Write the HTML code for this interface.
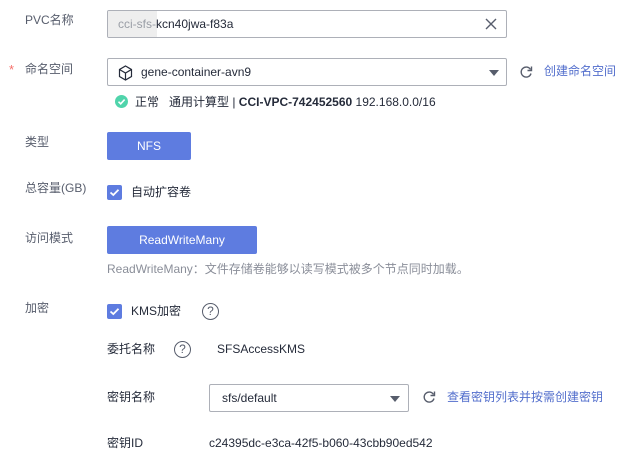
<!DOCTYPE html>
<html><head><meta charset="utf-8"><style>
*{box-sizing:border-box;margin:0;padding:0}
body{width:620px;height:456px;background:#fff;font-family:"Liberation Sans","Noto Sans CJK SC",sans-serif;font-size:12px;color:#252b3a;position:relative;overflow:hidden}
.a{position:absolute;white-space:nowrap;line-height:16px}
.box{position:absolute;border:1px solid #adb0b8;border-radius:2px;background:#fff}
.btn{position:absolute;background:#5e7ce0;color:#fff;border-radius:2px;text-align:center;font-size:12px}
.cb{position:absolute;width:15px;height:15px;background:#5e7ce0;border-radius:2px}
.link{color:#526ecc}
.tri{position:absolute;width:0;height:0;border-left:5px solid transparent;border-right:5px solid transparent;border-top:6px solid #575d6c}
.q{position:absolute;width:17px;height:17px;border:1.3px solid #575d6c;border-radius:50%;font-size:12px;text-align:center;line-height:15px;color:#575d6c}
</style></head><body>
<div class="a" style="left:25px;top:12px;color:#575d6c">PVC名称</div>
<div class="box" style="left:107px;top:10px;width:400px;height:28px;overflow:hidden">
 <div style="position:absolute;left:0;top:0;width:49px;height:26px;background:#eeeeee"></div>
 <div class="a" style="left:10px;top:5px;color:#9a9ea6">cci-sfs-<span style="color:#252b3a">kcn40jwa-f83a</span></div>
 <svg style="position:absolute;left:377px;top:7px" width="12" height="12"><path d="M1 1L11 11M11 1L1 11" stroke="#575d6c" stroke-width="1.4"/></svg>
</div>
<div class="a" style="left:9px;top:62px;color:#f66f6a;font-size:13px">*</div>
<div class="a" style="left:25px;top:61px;color:#575d6c">命名空间</div>
<div class="box" style="left:107px;top:58px;width:400px;height:28px">
 <svg style="position:absolute;left:10px;top:6px" width="15" height="16" viewBox="0 0 15 16"><path d="M7.5 1L13.5 4.5V11.5L7.5 15L1.5 11.5V4.5Z M1.5 4.5L7.5 8L13.5 4.5 M7.5 8V15" fill="none" stroke="#252b3a" stroke-width="1.2"/></svg>
 <div class="a" style="left:33px;top:5px">gene-container-avn9</div>
 <div class="tri" style="left:381px;top:11px"></div>
</div>
<svg style="position:absolute;left:519px;top:65px" width="14" height="14" viewBox="0 0 14 14"><path d="M11.5 4.5A5 5 0 1 0 12 8.5" fill="none" stroke="#575d6c" stroke-width="1.4"/><path d="M12.5 1.5V5.5H8.5" fill="none" stroke="#575d6c" stroke-width="1.4"/></svg>
<div class="a link" style="left:544px;top:63px">创建命名空间</div>
<svg style="position:absolute;left:115px;top:95px" width="13" height="13"><circle cx="6.5" cy="6.5" r="6.5" fill="#50d4ab"/><path d="M3.5 6.7L5.7 8.8L9.6 4.6" fill="none" stroke="#fff" stroke-width="1.6"/></svg>
<div class="a" style="left:135px;top:94px">正常&nbsp;&nbsp;&nbsp;通用计算型 | <b>CCI-VPC-742452560</b> 192.168.0.0/16</div>

<div class="a" style="left:25px;top:134px;color:#575d6c">类型</div>
<div class="btn" style="left:107px;top:132px;width:84px;height:28px;line-height:28px">NFS</div>

<div class="a" style="left:25px;top:180px;color:#575d6c">总容量(GB)</div>
<div class="cb" style="left:107px;top:185px"><svg width="15" height="15"><path d="M3.5 7.5L6.3 10L11.5 4.8" fill="none" stroke="#fff" stroke-width="1.8"/></svg></div>
<div class="a" style="left:131px;top:184px">自动扩容卷</div>

<div class="a" style="left:25px;top:230px;color:#575d6c">访问模式</div>
<div class="btn" style="left:107px;top:226px;width:150px;height:28px;line-height:28px">ReadWriteMany</div>
<div class="a" style="left:107px;top:261px;color:#8a8e99">ReadWriteMany：文件存储卷能够以读写模式被多个节点同时加载。</div>

<div class="a" style="left:25px;top:300px;color:#575d6c">加密</div>
<div class="cb" style="left:107px;top:304px"><svg width="15" height="15"><path d="M3.5 7.5L6.3 10L11.5 4.8" fill="none" stroke="#fff" stroke-width="1.8"/></svg></div>
<div class="a" style="left:131px;top:303px">KMS加密</div>
<div class="q" style="left:202px;top:303px">?</div>

<div class="a" style="left:107px;top:341px">委托名称</div>
<div class="q" style="left:174px;top:341px">?</div>
<div class="a" style="left:217px;top:341px">SFSAccessKMS</div>

<div class="a" style="left:107px;top:389px">密钥名称</div>
<div class="box" style="left:209px;top:384px;width:200px;height:28px">
 <div class="a" style="left:12px;top:5px">sfs/default</div>
 <div class="tri" style="left:180px;top:11px"></div>
</div>
<svg style="position:absolute;left:422px;top:390px" width="14" height="14" viewBox="0 0 14 14"><path d="M11.5 4.5A5 5 0 1 0 12 8.5" fill="none" stroke="#575d6c" stroke-width="1.4"/><path d="M12.5 1.5V5.5H8.5" fill="none" stroke="#575d6c" stroke-width="1.4"/></svg>
<div class="a link" style="left:447px;top:389px">查看密钥列表并按需创建密钥</div>

<div class="a" style="left:107px;top:435px">密钥ID</div>
<div class="a" style="left:209px;top:435px">c24395dc-e3ca-42f5-b060-43cbb90ed542</div>
</body></html>
